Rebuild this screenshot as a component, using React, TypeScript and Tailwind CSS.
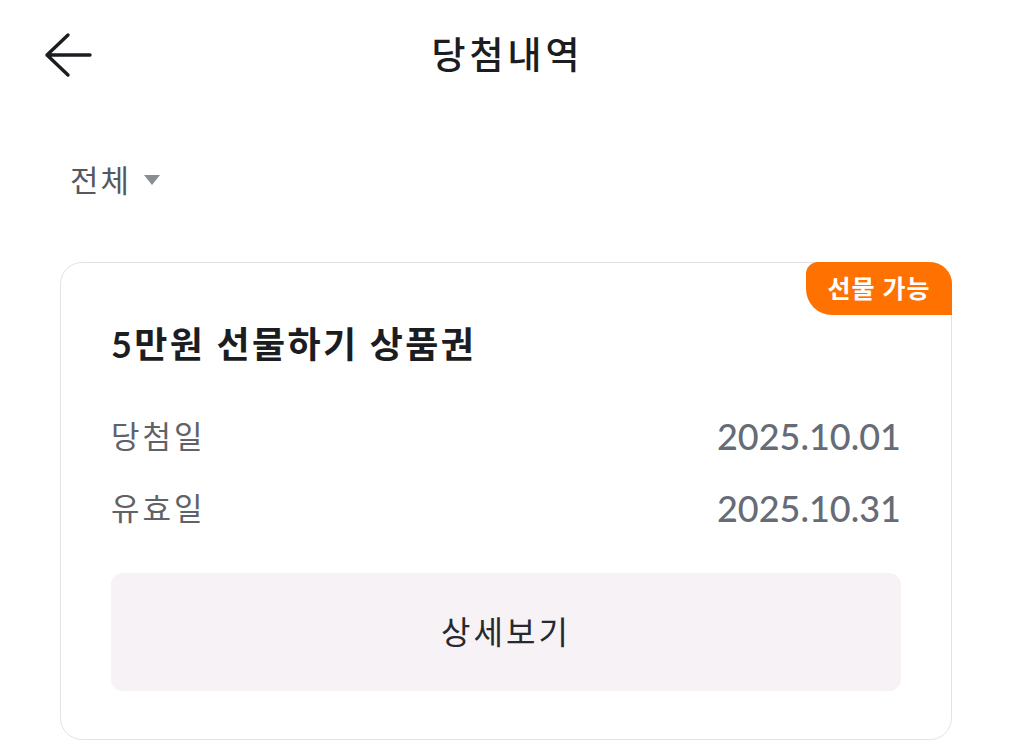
import React from "react";

const FONT = "font-['Lato','Noto_Sans_CJK_KR',sans-serif]";

const InfoRow = ({ label, value }: { label: string; value: string }) => {
  return (
    <div className="flex items-center justify-between h-[72px]">
      <span className="text-[31px] text-[#5f6369] tracking-[3px]">{label}</span>
      <span className="text-[36px] font-medium text-[#666c76]">{value}</span>
    </div>
  );
};

const PrizeCard = () => {
  return (
    <div className="relative ml-[60px] mr-[59px] rounded-[22px] border border-[#e4e2e6] bg-white px-[50px] pt-[56px] pb-[48px]">
      <div className="absolute -top-px -right-px h-[53px] w-[146px] rounded-tr-[22px] rounded-bl-[26px] rounded-tl-[12px] bg-[#ff7100] flex items-center justify-center">
        <span className="text-[25px] font-bold text-white tracking-[1px]">선물 가능</span>
      </div>
      <h2 className="text-[36px] font-bold text-[#1b1d21] leading-[50px] tracking-[2.4px]">
        5만원 선물하기 상품권
      </h2>
      <div className="mt-[31px]">
        <InfoRow label="당첨일" value="2025.10.01" />
        <InfoRow label="유효일" value="2025.10.31" />
      </div>
      <button className="mt-[29px] w-full h-[118px] rounded-[12px] bg-[#f6f2f6] text-[32px] text-[#26292e] font-normal tracking-[3px]">
        상세보기
      </button>
    </div>
  );
};

export default function App() {
  return (
    <div className={`${FONT} w-[1011px] h-[750px] bg-white overflow-hidden`}>
      <header className="relative flex items-center justify-center h-[110px]">
        <button className="absolute left-[38px] top-[27px] p-1">
          <svg width="52" height="48" viewBox="0 0 52 48" fill="none">
            <path d="M26 4 L5 24 L26 44 M5 24 L48 24" stroke="#1b1d21" strokeWidth="3.4" strokeLinecap="round" strokeLinejoin="round" />
          </svg>
        </button>
        <h1 className="text-[37px] font-medium text-[#1b1d21] tracking-[4px] pl-[4px]">당첨내역</h1>
      </header>
      <div className="flex items-center gap-[12px] px-[70px] h-[140px] mb-[12px]">
        <span className="text-[31px] text-[#55585e] tracking-[2px]">전체</span>
        <svg width="18" height="12" viewBox="0 0 18 12">
          <path d="M1 1 L17 1 L9 11 Z" fill="#8a8d93" />
        </svg>
      </div>
      <PrizeCard />
    </div>
  );
}
